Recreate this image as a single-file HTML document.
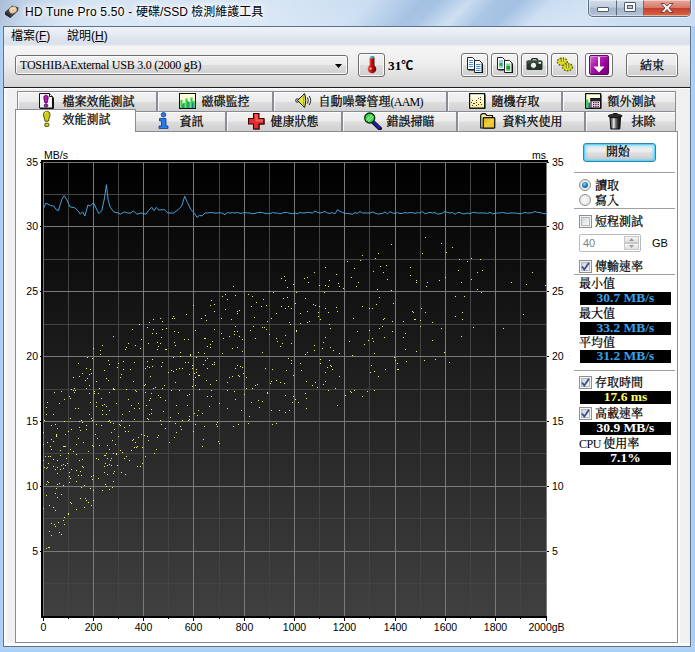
<!DOCTYPE html>
<html lang="zh-Hant">
<head>
<meta charset="utf-8">
<title>HD Tune Pro 5.50 - 硬碟/SSD 檢測維護工具</title>
<style>
*{box-sizing:border-box;margin:0;padding:0}
html,body{width:695px;height:652px;overflow:hidden}
body{position:relative;background:#bcd5ef;font-family:"Liberation Serif","Noto Serif CJK SC",serif;font-size:12px;color:#000;line-height:1}
.abs{position:absolute}
#frame{position:absolute;left:0;top:0;width:695px;height:652px;background:linear-gradient(180deg,#c3d8ef 0,#cbdef3 26px,#b9d3ef 100%)}
#streak{position:absolute;left:0;top:0;width:695px;height:26px;background:linear-gradient(135deg,rgba(255,255,255,0) 0,rgba(255,255,255,.3) 60px,rgba(255,255,255,.32) 200px,rgba(255,255,255,.12) 262px,rgba(100,145,200,.34) 300px,rgba(100,145,200,.30) 312px,rgba(255,255,255,.10) 333px,rgba(100,145,200,.30) 352px,rgba(100,145,200,.34) 368px,rgba(255,255,255,.12) 392px,rgba(255,255,255,.22) 420px,rgba(255,255,255,.05) 460px,rgba(255,255,255,0) 100%)}
#client{position:absolute;left:3px;top:26px;width:688px;height:621px;border:1px solid #5f7186;background:#f0f0f0}
#title{position:absolute;left:25px;top:3px;height:18px;line-height:18px;font-family:"Liberation Sans","Noto Sans CJK TC",sans-serif;font-size:12px;white-space:nowrap;color:#000;text-shadow:0 0 6px #fff,0 0 6px #fff,0 0 10px #fff,0 0 3px #fff}
#menubar{position:absolute;left:4px;top:27px;width:686px;height:19px;background:linear-gradient(180deg,#eef2f8 0,#e6ebf3 40%,#dde3ec 60%,#dbe1ea 90%,#eceff3 100%)}
.menu{position:absolute;top:27px;height:19px;line-height:19px;font-family:"Liberation Sans","Noto Sans CJK TC",sans-serif;font-size:12px;white-space:nowrap}
#toolbar{position:absolute;left:4px;top:46px;width:686px;height:41px;background:linear-gradient(180deg,#f5f5f5 0,#ededed 45%,#d4d4d4 100%)}
#tbline{position:absolute;left:4px;top:87px;width:686px;height:1px;background:#1c1c1c}
#tbline2{position:absolute;left:4px;top:88px;width:686px;height:1px;background:#fff}
.btn{position:absolute;border:1px solid #707070;border-radius:3px;background:linear-gradient(180deg,#f2f2f2 0,#ebebeb 48%,#dddddd 52%,#cfcfcf 100%);box-shadow:inset 0 0 0 1px rgba(255,255,255,.85)}
.tab{position:absolute;border:1px solid #898c95;border-bottom:none;background:linear-gradient(180deg,#f2f2f2 0,#ebebeb 48%,#dddddd 52%,#cfcfcf 100%);box-shadow:inset 1px 1px 0 rgba(255,255,255,.8)}
.tab.sel{background:#fff;z-index:3;box-shadow:none}
.tl{margin-left:.6px;position:absolute;white-space:nowrap;height:12px;line-height:12px;font-size:12px;z-index:4;-webkit-text-stroke:0.25px #000}
#pane{position:absolute;left:15px;top:131px;width:663px;height:512px;border:1px solid #898c95;background:#fff}
.sep{position:absolute;left:574px;width:101px;height:1px;background:#a0a0a0}
.lbl{position:absolute;white-space:nowrap;height:12px;line-height:12px;font-size:12px;-webkit-text-stroke:0.25px #000}
.val{position:absolute;left:580px;width:91px;height:13px;background:#000;text-align:center;font-family:"Liberation Serif",serif;font-weight:bold;font-size:13.5px;line-height:11px;white-space:nowrap;overflow:hidden}
.chk{position:absolute;left:579px;width:13px;height:13px;border:1px solid #8e8f8f;background:#f4f4f4}
.chk::before{content:"";box-sizing:border-box;position:absolute;left:1px;top:1px;width:9px;height:9px;border:1px solid #b4b9bf;background:linear-gradient(135deg,#cdd2d7 0,#e6e8ea 50%,#f7f7f7 100%)}
.chk svg{position:absolute;left:1px;top:1px}
.radio{position:absolute;left:579px;width:12px;height:12px;border-radius:50%;border:1px solid #8e8f8f;background:radial-gradient(circle at 50% 50%,#fdfdfd 0,#e9e9e9 60%,#d5d5d5 100%)}
.icon{position:absolute;z-index:4}
</style>
</head>
<body>
<div id="frame"></div><div id="streak"></div>
<div class="abs" style="left:0;top:26px;width:4px;height:626px;background:linear-gradient(90deg,#a9cdf3,#b6d6f7)"></div>
<div class="abs" style="left:690px;top:26px;width:5px;height:626px;background:linear-gradient(90deg,#b6d6f7,#a6cbf2)"></div>
<div class="abs" style="left:0;top:646px;width:695px;height:6px;background:linear-gradient(180deg,#b6d6f7,#a9cdf3)"></div>
<div class="abs" style="left:0;top:0;width:120px;height:26px;background:linear-gradient(100deg,rgba(120,140,170,.35) 0,rgba(120,140,170,.12) 25px,rgba(120,140,170,0) 70px)"></div>
<svg class="abs" style="left:4px;top:4px" width="16" height="16" viewBox="0 0 16 16">
 <defs><radialGradient id="plat" cx="50%" cy="45%" r="50%"><stop offset="0" stop-color="#f8d9a8"/><stop offset="0.25" stop-color="#fff0d8"/><stop offset="1" stop-color="#d9b07c"/></radialGradient></defs>
 <path d="M1 8 L8.5 1.5 L14.5 3.5 L14 7 L6.5 14 L1 10.5 Z" fill="#3a3f42"/>
 <path d="M1 8 L6.5 12 L6.5 14 L1 10.5 Z" fill="#22272a"/>
 <ellipse cx="9" cy="6" rx="4" ry="3.4" transform="rotate(-25 9 6)" fill="url(#plat)"/>
 <circle cx="9" cy="6" r="0.9" fill="#c99a62"/>
</svg>
<div id="title"><span style="letter-spacing:.22px">HD Tune Pro 5.50 - </span>硬碟/SSD 檢測維護工具</div>
<!-- caption buttons -->
<div class="abs" style="left:588px;top:0;width:103px;height:17px;border:1px solid #5c6d80;border-top:none;border-radius:0 0 5px 5px;overflow:hidden;background:linear-gradient(180deg,#d3dde9 0,#c0cddd 45%,#a5b6cb 50%,#b3c3d7 100%);box-shadow:0 0 0 1px rgba(255,255,255,.55)">
 <div class="abs" style="left:27px;top:0;width:1px;height:17px;background:#5c6d80"></div>
 <div class="abs" style="left:54px;top:0;width:1px;height:17px;background:#5c6d80"></div>
 <div class="abs" style="left:55px;top:0;width:47px;height:17px;background:linear-gradient(180deg,#e7aa9c 0,#d8786a 45%,#c4402c 50%,#d2603f 85%,#e08a5c 100%)"></div>
 <div class="abs" style="left:0;top:0;width:102px;height:16px;box-shadow:inset 0 0 0 1px rgba(255,255,255,.45);border-radius:0 0 4px 4px"></div>
 <!-- minimize -->
 <div class="abs" style="left:8px;top:7px;width:12px;height:5px;border:1px solid #515c6b;background:#fff;border-radius:1px"></div>
 <!-- maximize -->
 <div class="abs" style="left:35px;top:2px;width:12px;height:10px;border:1px solid #515c6b;background:#fff;border-radius:1px"></div>
 <div class="abs" style="left:38px;top:5px;width:6px;height:4px;border:1px solid #515c6b;background:#b7cbe3"></div>
 <!-- close X -->
 <svg class="abs" style="left:70px;top:2px" width="16" height="12" viewBox="0 0 16 12"><path d="M2 1.5h3.2l2.8 2.7 2.8-2.7H14L10 6l4 4.5h-3.2L8 7.6 5.2 10.5H2L6 6z" fill="#fff" stroke="#5a3a3a" stroke-width="0.9" stroke-linejoin="round"/></svg>
</div>

<div id="client"></div>
<div id="menubar"></div>
<div class="menu" style="left:11px">檔案(<u>F</u>)</div>
<div class="menu" style="left:67px">說明(<u>H</u>)</div>
<div id="toolbar"></div><div id="tbline"></div><div id="tbline2"></div>
<!-- combo -->
<div class="abs" style="left:15px;top:55px;width:333px;height:20px;border:1px solid #707070;border-radius:3px;background:linear-gradient(180deg,#f2f2f2 0,#ebebeb 48%,#dddddd 52%,#cfcfcf 100%);box-shadow:inset 0 0 0 1px rgba(255,255,255,.85)"></div>
<div class="lbl" style="left:20px;top:59px;letter-spacing:-.23px;-webkit-text-stroke:0">TOSHIBAExternal USB 3.0 (2000 gB)</div>
<svg class="abs" style="left:335px;top:64px" width="7" height="4" viewBox="0 0 7 4"><path d="M0 0h7L3.500 4z" fill="#000"/></svg>
<!-- thermometer -->
<div class="btn" style="left:358px;top:53px;width:27px;height:24px"></div>
<svg class="abs" style="left:365px;top:55px" width="14" height="19" viewBox="0 0 14 19">
 <defs><linearGradient id="thr" x1="0" y1="0" x2="1" y2="0"><stop offset="0" stop-color="#f05a4a"/><stop offset="0.4" stop-color="#c81414"/><stop offset="1" stop-color="#6a0606"/></linearGradient>
 <linearGradient id="thb" x1="0" y1="0" x2="1" y2="0"><stop offset="0" stop-color="#7fd0e6"/><stop offset="1" stop-color="#2a6f90"/></linearGradient></defs>
 <rect x="4.5" y="1" width="5" height="4" rx="1.5" fill="url(#thb)"/>
 <rect x="4.5" y="3.5" width="5" height="10" fill="url(#thr)"/>
 <circle cx="7" cy="14" r="4.3" fill="url(#thr)"/>
 <circle cx="5.6" cy="13.6" r="1" fill="#ffd8c8"/>
</svg>
<div class="abs" style="left:388px;top:57px;font-family:'Liberation Serif','Noto Serif CJK SC',serif;font-weight:bold;font-size:13.3px;line-height:16px;white-space:nowrap">31<span style="font-family:'Noto Sans CJK TC',sans-serif;font-size:12px;font-weight:bold">℃</span></div>
<!-- toolbar buttons -->
<div class="btn" style="left:461px;top:53px;width:27px;height:24px"></div>
<svg class="abs" style="left:466px;top:57px" width="18" height="16" viewBox="0 0 18 16">
 <path d="M1.5 0.5h5l2 2v10h-7z" fill="#fff" stroke="#222" stroke-width="1"/>
 <path d="M3 3.5h4M3 5.5h4M3 7.5h4M3 9.5h4" stroke="#3a8fe0" stroke-width="1"/>
 <path d="M8.500 3.500h5l2.500 2.500v9.500h-7.500z" fill="#fff" stroke="#222" stroke-width="1"/>
 <path d="M10 7.500h4.500M10 9.500h4.500M10 11.500h4.500M10 13.500h4.500" stroke="#3a8fe0" stroke-width="1"/>
 <path d="M9.500 16h7v-9.500M2.500 13h5.500" stroke="#111" stroke-width="1" fill="none"/>
</svg>
<div class="btn" style="left:491px;top:53px;width:27px;height:24px"></div>
<svg class="abs" style="left:496px;top:57px" width="18" height="16" viewBox="0 0 18 16">
 <path d="M1.5 0.500h5l2 2v10h-7z" fill="#fff" stroke="#222" stroke-width="1"/>
 <rect x="3" y="3" width="4" height="8" fill="#8fd0f0"/><rect x="3.500" y="6" width="3" height="3" fill="#2fb030"/>
 <path d="M8.500 3.500h5l2.500 2.500v9.500h-7.500z" fill="#fff" stroke="#222" stroke-width="1"/>
 <rect x="10" y="6.500" width="4.500" height="7.500" fill="#8fd0a0"/><rect x="10.500" y="9" width="3.500" height="3.500" fill="#1f9a28"/>
 <path d="M9.500 16h7v-9.500M2.500 13h5.500" stroke="#111" stroke-width="1" fill="none"/>
</svg>
<div class="btn" style="left:521px;top:53px;width:27px;height:24px"></div>
<svg class="abs" style="left:526px;top:58px" width="17" height="13" viewBox="0 0 17 13">
 <path d="M5 2.500 L6.500 0.500 H10.500 L12 2.500" fill="none" stroke="#1d2a22" stroke-width="1.4"/>
 <rect x="0.500" y="2.500" width="16" height="9.500" rx="1.500" fill="#24362b"/>
 <rect x="0.500" y="2.500" width="16" height="3" rx="1.500" fill="#3b5243"/>
 <circle cx="7.500" cy="7.300" r="3.100" fill="#f4f4f4" stroke="#111" stroke-width="0.800"/>
 <rect x="12.500" y="4" width="2.500" height="1.800" fill="#e8efe8"/>
</svg>
<div class="btn" style="left:551px;top:53px;width:27px;height:24px"></div>
<svg class="abs" style="left:556px;top:56px" width="19" height="18" viewBox="0 0 19 18">
 <g><ellipse cx="6.300" cy="5.700" rx="5" ry="3.700" fill="#dcdc24" stroke="#5e5c00" stroke-width="1.300" stroke-dasharray="1.600 1.300"/><ellipse cx="6.300" cy="5.700" rx="3.900" ry="2.700" fill="#dcdc24"/></g>
 <g><ellipse cx="11.500" cy="11.100" rx="5" ry="3.700" fill="#d4d41c" stroke="#5e5c00" stroke-width="1.300" stroke-dasharray="1.600 1.300"/><ellipse cx="11.500" cy="11.100" rx="3.900" ry="2.700" fill="#d4d41c"/></g>
 <path d="M6.300 1v5M11.700 7v5" stroke="#f4f0a8" stroke-width="1.200"/>
 <path d="M5.300 1.500v4.500M7.300 1.500v4.500M10.700 7.500v4.500M12.700 7.500v4.500" stroke="#6a6810" stroke-width="0.800"/>
</svg>
<div class="btn" style="left:585px;top:53px;width:28px;height:24px;background:#fff"></div>
<div class="abs" style="left:589px;top:55px;width:20px;height:20px;border-radius:2px;background:linear-gradient(135deg,#d070d4 0,#b020b0 35%,#900090 70%,#780078 100%);border:1px solid #6a006a;box-shadow:inset 1px 1px 0 rgba(255,255,255,.35)"></div>
<svg class="abs" style="left:592px;top:57px" width="14" height="16" viewBox="0 0 14 16"><path d="M6 0h2v9.500h4.500L7 15.500 1.500 9.500H6z" fill="#fff"/></svg>
<!-- exit -->
<div class="btn" style="left:626px;top:53px;width:52px;height:24px"></div>
<div class="lbl" style="left:640px;top:60px">結束</div>

<!-- row 1 -->
<div class="tab" style="left:17px;top:91px;width:140px;height:21px"></div>
<div class="tab" style="left:157px;top:91px;width:116px;height:21px"></div>
<div class="tab" style="left:273px;top:91px;width:174px;height:21px"></div>
<div class="tab" style="left:447px;top:91px;width:115px;height:21px"></div>
<div class="tab" style="left:562px;top:91px;width:114px;height:21px"></div>
<!-- row 2 -->
<div class="tab" style="left:134px;top:111px;width:92px;height:20px"></div>
<div class="tab" style="left:226px;top:111px;width:116px;height:20px"></div>
<div class="tab" style="left:342px;top:111px;width:115px;height:20px"></div>
<div class="tab" style="left:457px;top:111px;width:128px;height:20px"></div>
<div class="tab" style="left:585px;top:111px;width:91px;height:20px"></div>
<div class="tab sel" style="left:15px;top:109px;width:121px;height:23px"></div>
<!-- row1 labels -->
<div class="tl" style="left:62px;top:96px">檔案效能測試</div>
<div class="tl" style="left:201px;top:96px">磁碟監控</div>
<div class="tl" style="left:318px;top:96px">自動噪聲管理<span style="letter-spacing:-.8px;-webkit-text-stroke:0">(AAM)</span></div>
<div class="tl" style="left:491px;top:96px">隨機存取</div>
<div class="tl" style="left:607px;top:96px">額外測試</div>
<!-- row2 labels -->
<div class="tl" style="left:62px;top:114px">效能測試</div>
<div class="tl" style="left:179px;top:116px">資訊</div>
<div class="tl" style="left:270px;top:116px">健康狀態</div>
<div class="tl" style="left:386px;top:116px">錯誤掃瞄</div>
<div class="tl" style="left:502px;top:116px">資料夾使用</div>
<div class="tl" style="left:631px;top:116px">抹除</div>
<!-- row1 icons -->
<svg class="icon" style="left:39px;top:93px" width="15" height="16" viewBox="0 0 15 16">
 <path d="M0.500 0.500h10l3 3v11.500h-13z" fill="#f4f4f4" stroke="#111"/>
 <path d="M10.500 0.500v3h3" fill="#fff" stroke="#111"/>
 <path d="M1 15.500h13.500v-11" fill="none" stroke="#111" stroke-width="1"/>
 <path d="M4.800 4.500c0-3 4.400-3 4.400 0 0 2-1 3.500-1.200 5.500h-2c-0.200-2-1.200-3.500-1.200-5.500z" fill="#b818b8" stroke="#4a004a" stroke-width="0.900"/>
 <rect x="5.300" y="11.300" width="3.400" height="2.500" rx="1" fill="#b818b8" stroke="#4a004a" stroke-width="0.900"/>
</svg>
<svg class="icon" style="left:179px;top:93px" width="17" height="16" viewBox="0 0 17 16">
 <rect x="0.500" y="0.500" width="16" height="15" fill="#fdfdd8" stroke="#111"/>
 <path d="M1 15.500h15.500" stroke="#111" stroke-width="1.500"/>
 <path d="M2.500 15v-8M5 15v-5M7.500 15v-9.500M10 15v-6M12.500 15v-10.500M14.700 15v-7" stroke="#34d048" stroke-width="2.200"/>
 <path d="M4 15v-4M9 15v-7M13.700 15v-5" stroke="#2070a0" stroke-width="1.200"/>
</svg>
<svg class="icon" style="left:295px;top:93px" width="17" height="16" viewBox="0 0 17 16">
 <circle cx="2.300" cy="7.500" r="1.700" fill="#ddd" stroke="#111" stroke-width="0.900"/>
 <path d="M2.500 7.500L9.500 0.600c1.600 4.500 1.600 9.300 0 13.800z" fill="#e6e640" stroke="#111" stroke-width="1" stroke-linejoin="round"/>
 <path d="M8 2.500c1 3.300 1 6.700 0 10" fill="none" stroke="#a8a020" stroke-width="1"/>
 <path d="M12.300 4.500c1.200 2 1.200 4 0 6M14.200 3c2 3 2 6 0 9" fill="none" stroke="#222" stroke-width="1"/>
</svg>
<svg class="icon" style="left:469px;top:93px" width="17" height="16" viewBox="0 0 17 16">
 <defs><linearGradient id="rnd" x1="0" y1="0" x2="0" y2="1"><stop offset="0" stop-color="#fffff4"/><stop offset="1" stop-color="#fcee9c"/></linearGradient></defs>
 <rect x="0.600" y="0.600" width="15" height="14.500" fill="url(#rnd)" stroke="#111" stroke-width="1.200"/>
 <path d="M1 15.600h15v-14" fill="none" stroke="#111" stroke-width="1"/>
 <path d="M3 7h1v1h-1zM2 9h1v1h-1zM3 12h1v1h-1zM5 10h1v1h-1zM7 7h1v1h-1zM7 9h1v1h-1zM7 12h1v1h-1zM9 5h1v1h-1zM9 11h1v1h-1zM11 4h1v1h-1zM11 6h1v1h-1zM11 9h1v1h-1zM12 11h1v1h-1zM4 10h1v1h-1z" fill="#5a3a10"/>
</svg>
<svg class="icon" style="left:585px;top:93px" width="17" height="16" viewBox="0 0 17 16">
 <rect x="0.600" y="0.600" width="15" height="14.500" fill="#ffffd8" stroke="#111" stroke-width="1.200"/>
 <path d="M1 15.600h15v-14" fill="none" stroke="#111" stroke-width="1"/>
 <path d="M2.200 15v-8.500" stroke="#38d048" stroke-width="2.200"/><path d="M4.300 15v-5.500" stroke="#2868b0" stroke-width="2"/>
 <rect x="6" y="5.500" width="9.500" height="9.500" fill="#fbe0ec" stroke="#111" stroke-width="1"/>
 <rect x="6" y="5.500" width="9.500" height="2.300" fill="#182858" stroke="#111" stroke-width="1"/>
 <path d="M8 9h1.300v1.300h-1.300zM10.300 9h1.300v1.300h-1.300zM12.600 9h1.300v1.300h-1.300zM8 11h1.300v1.300h-1.300zM10.300 11h1.300v1.300h-1.300zM12.600 11h1.300v1.300h-1.300zM8 13h1.300v1.300h-1.300zM10.300 13h1.300v1.300h-1.300zM12.600 13h1.300v1.300h-1.300z" fill="#3a1848"/>
</svg>
<!-- row2 icons -->
<svg class="icon" style="left:42px;top:110px" width="10" height="18" viewBox="0 0 10 18">
 <path d="M1.500 4.500c0-4.300 6.500-4.300 6.500 0 0 2.200-1.300 4-1.600 6.700h-3.300c-0.300-2.700-1.600-4.500-1.600-6.700z" fill="#cfcf18" stroke="#4a4800" stroke-width="1"/>
 <path d="M3 3.500c0.300-1.300 1.500-1.800 2.300-1.500" stroke="#f4f480" stroke-width="1" fill="none"/>
 <rect x="2.700" y="13.200" width="4.200" height="3.300" rx="1.400" fill="#cfcf18" stroke="#4a4800" stroke-width="1"/>
</svg>
<svg class="icon" style="left:157px;top:112px" width="13" height="17" viewBox="0 0 13 17">
 <circle cx="6.500" cy="2.800" r="2.300" fill="#2a7ae8" stroke="#0a3a90" stroke-width="0.800"/>
 <path d="M2.500 6.500h6.500v7.500h2v2.500h-9v-2.500h2.500v-5h-2z" fill="#2a7ae8" stroke="#0a3a90" stroke-width="0.800"/>
</svg>
<svg class="icon" style="left:248px;top:113px" width="17" height="17" viewBox="0 0 17 17">
 <path d="M5.500 0.500h5.500v5h5v5.500h-5v5h-5.500v-5h-5v-5.500h5z" fill="#e03030" stroke="#3a0505" stroke-width="1.100"/>
 <path d="M6.500 1.500h3v5h5.500v2h-7.500v-3z" fill="#ff8878" opacity=".55"/>
 <path d="M6 16.300h5.300v-5h5v-5" fill="none" stroke="#300" stroke-width="0.800" opacity=".7"/>
</svg>
<svg class="icon" style="left:363px;top:112px" width="19" height="18" viewBox="0 0 19 18">
 <path d="M10.500 10.500l6.300 6" stroke="#0a0a30" stroke-width="4.200" stroke-linecap="round"/>
 <path d="M10.300 10l6 5.800" stroke="#20209c" stroke-width="2.600" stroke-linecap="round"/>
 <circle cx="6.700" cy="6" r="5" fill="#44d454" stroke="#082a0c" stroke-width="1.300"/>
 <path d="M3.500 8L9 3M5 9.500l5.500-5" stroke="#a8f4a8" stroke-width="1" fill="none"/>
</svg>
<svg class="icon" style="left:480px;top:113px" width="16" height="16" viewBox="0 0 16 16">
 <defs><linearGradient id="fld" x1="0" y1="0" x2="1" y2="1"><stop offset="0" stop-color="#d8a818"/><stop offset="0.5" stop-color="#f0d040"/><stop offset="1" stop-color="#e0b828"/></linearGradient></defs>
 <path d="M0.700 3c0-1.500 1-2.300 2.300-2.300h2.200l1.800 1.800h5.500v12.500h-11.800z" fill="#f2eaa8" stroke="#111" stroke-width="1.200" stroke-linejoin="round"/>
 <rect x="3.200" y="4.700" width="11.500" height="10.500" rx="0.800" fill="url(#fld)" stroke="#111" stroke-width="1.300"/>
</svg>
<svg class="icon" style="left:608px;top:113px" width="15" height="17" viewBox="0 0 15 17">
 <defs><linearGradient id="tr" x1="0" y1="0" x2="1" y2="0"><stop offset="0" stop-color="#2a2a2a"/><stop offset="0.22" stop-color="#8a8a8a"/><stop offset="0.36" stop-color="#f4f4f4"/><stop offset="0.5" stop-color="#8a8a8a"/><stop offset="0.75" stop-color="#2e2e2e"/><stop offset="1" stop-color="#080808"/></linearGradient></defs>
 <path d="M5 1.500c0-1.300 4.500-1.300 4.500 0" fill="none" stroke="#111" stroke-width="1.200"/>
 <path d="M2 4h10.500l-0.700 12h-9z" fill="url(#tr)" stroke="#111" stroke-width="1"/>
 <ellipse cx="7.200" cy="3" rx="7" ry="1.800" fill="#2c2c2c" stroke="#0a0a0a" stroke-width="0.800"/>
</svg>

<div class="abs" style="left:4px;top:89px;width:5px;height:555px;background:linear-gradient(90deg,#fdfdfd,rgba(253,253,253,0))"></div>
<div id="pane"></div>
<div class="abs" style="left:678px;top:131px;width:2px;height:514px;background:#fff"></div>
<div class="abs" style="left:4px;top:643px;width:686px;height:3px;background:#fcfcfc"></div>
<svg id="chart" width="695" height="652" viewBox="0 0 695 652" style="position:absolute;left:0;top:0" shape-rendering="crispEdges">
<defs><linearGradient id="cg" x1="0" y1="0" x2="0" y2="1"><stop offset="0" stop-color="#000"/><stop offset="1" stop-color="#404040"/></linearGradient></defs>
<rect x="41" y="160" width="506" height="458" fill="#000"/>
<rect x="43" y="162" width="504" height="454" fill="url(#cg)"/>
<path d="M68.5 162V616M118.5 162V616M168.5 162V616M219.5 162V616M269.5 162V616M319.5 162V616M369.5 162V616M420.5 162V616M470.5 162V616M520.5 162V616M43 583.5H547M43 518.5H547M43 453.5H547M43 389.5H547M43 324.5H547M43 259.5H547M43 194.5H547" stroke="#444444" stroke-width="1" fill="none"/>
<path d="M43.5 162V616M93.5 162V616M143.5 162V616M193.5 162V616M244.5 162V616M294.5 162V616M344.5 162V616M395.5 162V616M445.5 162V616M495.5 162V616M546.5 162V616M43 616.5H547M43 551.5H547M43 486.5H547M43 421.5H547M43 356.5H547M43 291.5H547M43 226.5H547M43 162.5H547" stroke="#7a7a7a" stroke-width="1" fill="none"/>
<rect x="41" y="160" width="2" height="458" fill="#000"/>
<rect x="41" y="160" width="507" height="2" fill="#000"/>
<rect x="41" y="616" width="506" height="2" fill="#000"/>
<path d="M40 551.5H41M547 551.5H549M40 486.5H41M547 486.5H549M40 421.5H41M547 421.5H549M40 356.5H41M547 356.5H549M40 291.5H41M547 291.5H549M40 226.5H41M547 226.5H549M40 162.5H41M547 162.5H549M43.5 618V621M68.5 618V619M93.5 618V621M118.5 618V619M143.5 618V621M168.5 618V619M193.5 618V621M219.5 618V619M244.5 618V621M269.5 618V619M294.5 618V621M319.5 618V619M344.5 618V621M369.5 618V619M395.5 618V621M420.5 618V619M445.5 618V621M470.5 618V619M495.5 618V621M520.5 618V619M546.5 618V621" stroke="#000" stroke-width="1" fill="none"/>
<path d="M81 420h1v1h-1zM57 467h1v1h-1zM65 465h1v1h-1zM101 398h1v1h-1zM153 329h1v1h-1zM80 498h1v1h-1zM89 414h1v1h-1zM204 426h1v1h-1zM163 411h1v1h-1zM123 361h1v1h-1zM214 364h1v1h-1zM120 377h1v1h-1zM82 422h1v1h-1zM214 311h1v1h-1zM222 353h1v1h-1zM413 312h1v1h-1zM266 329h1v1h-1zM119 424h1v1h-1zM174 437h1v1h-1zM76 481h1v1h-1zM63 464h1v1h-1zM325 285h1v1h-1zM141 339h1v1h-1zM88 451h1v1h-1zM112 487h1v1h-1zM211 300h1v1h-1zM231 319h1v1h-1zM358 282h1v1h-1zM69 472h1v1h-1zM84 485h1v1h-1zM68 431h1v1h-1zM81 475h1v1h-1zM74 388h1v1h-1zM182 420h1v1h-1zM330 328h1v1h-1zM80 430h1v1h-1zM477 272h1v1h-1zM86 388h1v1h-1zM132 440h1v1h-1zM471 258h1v1h-1zM102 414h1v1h-1zM49 505h1v1h-1zM425 312h1v1h-1zM523 314h1v1h-1zM96 402h1v1h-1zM180 356h1v1h-1zM248 294h1v1h-1zM180 426h1v1h-1zM314 272h1v1h-1zM415 319h1v1h-1zM380 266h1v1h-1zM373 341h1v1h-1zM46 407h1v1h-1zM403 321h1v1h-1zM98 459h1v1h-1zM219 403h1v1h-1zM384 337h1v1h-1zM379 328h1v1h-1zM198 375h1v1h-1zM43 460h1v1h-1zM207 396h1v1h-1zM306 398h1v1h-1zM117 367h1v1h-1zM293 284h1v1h-1zM189 374h1v1h-1zM199 375h1v1h-1zM360 260h1v1h-1zM412 311h1v1h-1zM61 465h1v1h-1zM374 371h1v1h-1zM79 376h1v1h-1zM420 320h1v1h-1zM461 336h1v1h-1zM135 442h1v1h-1zM47 467h1v1h-1zM133 381h1v1h-1zM459 259h1v1h-1zM113 481h1v1h-1zM76 454h1v1h-1zM111 465h1v1h-1zM265 368h1v1h-1zM61 391h1v1h-1zM64 399h1v1h-1zM135 390h1v1h-1zM76 470h1v1h-1zM55 510h1v1h-1zM293 375h1v1h-1zM137 466h1v1h-1zM280 346h1v1h-1zM70 398h1v1h-1zM333 350h1v1h-1zM455 316h1v1h-1zM238 375h1v1h-1zM76 509h1v1h-1zM85 498h1v1h-1zM252 388h1v1h-1zM83 442h1v1h-1zM532 272h1v1h-1zM140 466h1v1h-1zM188 420h1v1h-1zM113 473h1v1h-1zM48 482h1v1h-1zM289 322h1v1h-1zM151 413h1v1h-1zM276 313h1v1h-1zM235 326h1v1h-1zM196 372h1v1h-1zM329 324h1v1h-1zM262 401h1v1h-1zM69 396h1v1h-1zM234 334h1v1h-1zM313 304h1v1h-1zM248 423h1v1h-1zM61 494h1v1h-1zM284 276h1v1h-1zM180 352h1v1h-1zM241 410h1v1h-1zM125 431h1v1h-1zM253 326h1v1h-1zM193 379h1v1h-1zM371 365h1v1h-1zM47 481h1v1h-1zM269 334h1v1h-1zM217 422h1v1h-1zM109 364h1v1h-1zM267 392h1v1h-1zM49 547h1v1h-1zM124 458h1v1h-1zM337 405h1v1h-1zM73 377h1v1h-1zM120 425h1v1h-1zM339 353h1v1h-1zM55 526h1v1h-1zM405 349h1v1h-1zM92 445h1v1h-1zM320 319h1v1h-1zM319 306h1v1h-1zM290 324h1v1h-1zM397 369h1v1h-1zM123 369h1v1h-1zM246 388h1v1h-1zM86 425h1v1h-1zM100 354h1v1h-1zM78 475h1v1h-1zM106 453h1v1h-1zM288 358h1v1h-1zM147 418h1v1h-1zM106 414h1v1h-1zM99 445h1v1h-1zM422 253h1v1h-1zM51 439h1v1h-1zM219 443h1v1h-1zM328 286h1v1h-1zM70 502h1v1h-1zM410 275h1v1h-1zM173 357h1v1h-1zM391 290h1v1h-1zM109 392h1v1h-1zM60 455h1v1h-1zM101 425h1v1h-1zM427 282h1v1h-1zM104 455h1v1h-1zM125 474h1v1h-1zM160 420h1v1h-1zM102 490h1v1h-1zM258 400h1v1h-1zM189 419h1v1h-1zM325 337h1v1h-1zM420 326h1v1h-1zM250 330h1v1h-1zM444 352h1v1h-1zM375 258h1v1h-1zM511 282h1v1h-1zM50 446h1v1h-1zM133 439h1v1h-1zM424 360h1v1h-1zM140 348h1v1h-1zM55 469h1v1h-1zM93 446h1v1h-1zM157 342h1v1h-1zM51 535h1v1h-1zM287 287h1v1h-1zM426 286h1v1h-1zM128 399h1v1h-1zM237 347h1v1h-1zM425 237h1v1h-1zM164 385h1v1h-1zM315 305h1v1h-1zM227 390h1v1h-1zM305 354h1v1h-1zM59 532h1v1h-1zM452 247h1v1h-1zM64 517h1v1h-1zM169 421h1v1h-1zM254 317h1v1h-1zM73 390h1v1h-1zM145 392h1v1h-1zM82 373h1v1h-1zM153 319h1v1h-1zM318 316h1v1h-1zM178 332h1v1h-1zM53 507h1v1h-1zM336 274h1v1h-1zM170 417h1v1h-1zM96 406h1v1h-1zM144 435h1v1h-1zM244 394h1v1h-1zM91 418h1v1h-1zM58 522h1v1h-1zM239 376h1v1h-1zM118 436h1v1h-1zM211 390h1v1h-1zM477 289h1v1h-1zM44 420h1v1h-1zM156 333h1v1h-1zM46 468h1v1h-1zM65 434h1v1h-1zM80 471h1v1h-1zM70 449h1v1h-1zM142 447h1v1h-1zM285 412h1v1h-1zM379 297h1v1h-1zM306 381h1v1h-1zM330 365h1v1h-1zM149 400h1v1h-1zM53 459h1v1h-1zM335 388h1v1h-1zM234 391h1v1h-1zM162 362h1v1h-1zM48 456h1v1h-1zM295 303h1v1h-1zM178 413h1v1h-1zM168 372h1v1h-1zM281 306h1v1h-1zM189 394h1v1h-1zM347 261h1v1h-1zM93 348h1v1h-1zM503 328h1v1h-1zM59 483h1v1h-1zM374 353h1v1h-1zM188 362h1v1h-1zM129 460h1v1h-1zM256 302h1v1h-1zM198 352h1v1h-1zM207 358h1v1h-1zM471 279h1v1h-1zM113 336h1v1h-1zM296 330h1v1h-1zM325 372h1v1h-1zM337 311h1v1h-1zM51 523h1v1h-1zM192 365h1v1h-1zM48 547h1v1h-1zM141 434h1v1h-1zM96 402h1v1h-1zM406 361h1v1h-1zM356 286h1v1h-1zM45 456h1v1h-1zM242 367h1v1h-1zM108 380h1v1h-1zM105 484h1v1h-1zM205 360h1v1h-1zM190 354h1v1h-1zM126 389h1v1h-1zM272 424h1v1h-1zM175 345h1v1h-1zM69 482h1v1h-1zM263 299h1v1h-1zM206 380h1v1h-1zM113 389h1v1h-1zM362 396h1v1h-1zM285 280h1v1h-1zM362 306h1v1h-1zM262 327h1v1h-1zM336 307h1v1h-1zM276 338h1v1h-1zM233 426h1v1h-1zM49 531h1v1h-1zM79 460h1v1h-1zM264 327h1v1h-1zM324 292h1v1h-1zM354 268h1v1h-1zM96 424h1v1h-1zM237 311h1v1h-1zM68 513h1v1h-1zM129 425h1v1h-1zM272 369h1v1h-1zM296 292h1v1h-1zM158 395h1v1h-1zM267 321h1v1h-1zM325 381h1v1h-1zM449 362h1v1h-1zM312 385h1v1h-1zM332 369h1v1h-1zM99 388h1v1h-1zM238 424h1v1h-1zM307 322h1v1h-1zM152 333h1v1h-1zM96 458h1v1h-1zM147 366h1v1h-1zM291 308h1v1h-1zM131 450h1v1h-1zM285 395h1v1h-1zM216 424h1v1h-1zM105 463h1v1h-1zM339 376h1v1h-1zM195 424h1v1h-1zM446 252h1v1h-1zM149 322h1v1h-1zM165 428h1v1h-1zM97 438h1v1h-1zM262 352h1v1h-1zM79 421h1v1h-1zM382 326h1v1h-1zM161 424h1v1h-1zM300 313h1v1h-1zM240 366h1v1h-1zM67 463h1v1h-1zM235 399h1v1h-1zM232 376h1v1h-1zM90 402h1v1h-1zM184 339h1v1h-1zM304 278h1v1h-1zM214 362h1v1h-1zM239 310h1v1h-1zM416 351h1v1h-1zM295 399h1v1h-1zM57 497h1v1h-1zM160 397h1v1h-1zM113 453h1v1h-1zM197 415h1v1h-1zM98 478h1v1h-1zM237 365h1v1h-1zM432 322h1v1h-1zM323 342h1v1h-1zM75 390h1v1h-1zM114 429h1v1h-1zM91 505h1v1h-1zM107 445h1v1h-1zM239 336h1v1h-1zM345 395h1v1h-1zM305 393h1v1h-1zM46 548h1v1h-1zM109 464h1v1h-1zM137 446h1v1h-1zM86 368h1v1h-1zM252 296h1v1h-1zM94 393h1v1h-1zM166 328h1v1h-1zM104 472h1v1h-1zM176 432h1v1h-1zM201 318h1v1h-1zM210 344h1v1h-1zM160 343h1v1h-1zM50 456h1v1h-1zM132 329h1v1h-1zM374 390h1v1h-1zM135 345h1v1h-1zM196 357h1v1h-1zM206 320h1v1h-1zM155 387h1v1h-1zM445 277h1v1h-1zM128 431h1v1h-1zM306 408h1v1h-1zM203 439h1v1h-1zM92 358h1v1h-1zM308 282h1v1h-1zM234 331h1v1h-1zM98 393h1v1h-1zM68 453h1v1h-1zM246 377h1v1h-1zM209 406h1v1h-1zM129 411h1v1h-1zM56 488h1v1h-1zM214 304h1v1h-1zM150 376h1v1h-1zM282 343h1v1h-1zM82 459h1v1h-1zM435 359h1v1h-1zM47 442h1v1h-1zM55 424h1v1h-1zM279 410h1v1h-1zM174 318h1v1h-1zM403 337h1v1h-1zM63 485h1v1h-1zM349 341h1v1h-1zM166 349h1v1h-1zM242 339h1v1h-1zM307 277h1v1h-1zM121 472h1v1h-1zM329 360h1v1h-1zM461 282h1v1h-1zM368 340h1v1h-1zM373 271h1v1h-1zM113 423h1v1h-1zM367 391h1v1h-1zM353 318h1v1h-1zM318 312h1v1h-1zM64 446h1v1h-1zM288 306h1v1h-1zM175 423h1v1h-1zM309 321h1v1h-1zM104 404h1v1h-1zM195 377h1v1h-1zM93 475h1v1h-1zM210 384h1v1h-1zM54 392h1v1h-1zM237 331h1v1h-1zM194 373h1v1h-1zM182 368h1v1h-1zM162 321h1v1h-1zM432 340h1v1h-1zM64 524h1v1h-1zM173 316h1v1h-1zM223 338h1v1h-1zM210 347h1v1h-1zM152 359h1v1h-1zM154 453h1v1h-1zM378 253h1v1h-1zM307 311h1v1h-1zM71 503h1v1h-1zM255 385h1v1h-1zM69 476h1v1h-1zM181 429h1v1h-1zM46 495h1v1h-1zM100 350h1v1h-1zM78 408h1v1h-1zM235 368h1v1h-1zM179 390h1v1h-1zM271 318h1v1h-1zM158 435h1v1h-1zM134 447h1v1h-1zM378 376h1v1h-1zM372 308h1v1h-1zM111 458h1v1h-1zM545 285h1v1h-1zM57 428h1v1h-1zM51 425h1v1h-1zM43 432h1v1h-1zM165 349h1v1h-1zM89 385h1v1h-1zM63 520h1v1h-1zM116 454h1v1h-1zM320 363h1v1h-1zM157 349h1v1h-1zM338 283h1v1h-1zM384 318h1v1h-1zM91 373h1v1h-1zM145 384h1v1h-1zM193 431h1v1h-1zM352 355h1v1h-1zM289 410h1v1h-1zM291 343h1v1h-1zM48 463h1v1h-1zM109 420h1v1h-1zM93 500h1v1h-1zM195 330h1v1h-1zM54 524h1v1h-1zM117 465h1v1h-1zM221 333h1v1h-1zM85 380h1v1h-1zM161 337h1v1h-1zM410 267h1v1h-1zM134 408h1v1h-1zM386 265h1v1h-1zM193 305h1v1h-1zM161 366h1v1h-1zM60 469h1v1h-1zM78 363h1v1h-1zM237 313h1v1h-1zM51 449h1v1h-1zM116 403h1v1h-1zM109 410h1v1h-1zM187 405h1v1h-1zM222 296h1v1h-1zM176 405h1v1h-1zM121 420h1v1h-1zM65 446h1v1h-1zM212 341h1v1h-1zM204 353h1v1h-1zM107 458h1v1h-1zM218 441h1v1h-1zM106 406h1v1h-1zM462 319h1v1h-1zM59 403h1v1h-1zM150 398h1v1h-1zM102 345h1v1h-1zM134 419h1v1h-1zM343 288h1v1h-1zM285 308h1v1h-1zM269 291h1v1h-1zM296 331h1v1h-1zM330 347h1v1h-1zM227 382h1v1h-1zM276 380h1v1h-1zM149 414h1v1h-1zM187 395h1v1h-1zM214 329h1v1h-1zM339 286h1v1h-1zM162 388h1v1h-1zM186 314h1v1h-1zM481 292h1v1h-1zM151 409h1v1h-1zM416 280h1v1h-1zM146 405h1v1h-1zM362 255h1v1h-1zM233 286h1v1h-1zM323 384h1v1h-1zM458 270h1v1h-1zM325 267h1v1h-1zM83 467h1v1h-1zM91 476h1v1h-1zM139 324h1v1h-1zM158 346h1v1h-1zM43 508h1v1h-1zM251 402h1v1h-1zM113 388h1v1h-1zM331 366h1v1h-1zM70 478h1v1h-1zM229 377h1v1h-1zM130 369h1v1h-1zM114 471h1v1h-1zM138 403h1v1h-1zM369 308h1v1h-1zM232 348h1v1h-1zM128 343h1v1h-1zM225 294h1v1h-1zM165 400h1v1h-1zM126 347h1v1h-1zM107 465h1v1h-1zM441 328h1v1h-1zM199 389h1v1h-1zM74 392h1v1h-1zM92 479h1v1h-1zM136 447h1v1h-1zM114 389h1v1h-1zM317 387h1v1h-1zM147 327h1v1h-1zM102 405h1v1h-1zM376 304h1v1h-1zM227 408h1v1h-1zM192 368h1v1h-1zM149 367h1v1h-1zM151 393h1v1h-1zM249 416h1v1h-1zM187 405h1v1h-1zM75 408h1v1h-1zM383 272h1v1h-1zM76 444h1v1h-1zM139 408h1v1h-1zM108 360h1v1h-1zM90 488h1v1h-1zM271 410h1v1h-1zM124 427h1v1h-1zM89 374h1v1h-1zM110 422h1v1h-1zM43 432h1v1h-1zM53 414h1v1h-1zM107 474h1v1h-1zM387 279h1v1h-1zM287 297h1v1h-1zM414 319h1v1h-1zM283 298h1v1h-1zM56 434h1v1h-1zM398 369h1v1h-1zM266 305h1v1h-1zM439 280h1v1h-1zM57 484h1v1h-1zM126 456h1v1h-1zM105 455h1v1h-1zM405 333h1v1h-1zM79 427h1v1h-1zM204 338h1v1h-1zM174 342h1v1h-1zM120 450h1v1h-1zM94 391h1v1h-1zM131 405h1v1h-1zM61 534h1v1h-1zM64 421h1v1h-1zM70 449h1v1h-1zM202 446h1v1h-1zM235 295h1v1h-1zM108 421h1v1h-1zM122 452h1v1h-1zM397 363h1v1h-1zM285 335h1v1h-1zM144 385h1v1h-1zM106 486h1v1h-1zM325 308h1v1h-1zM291 360h1v1h-1zM63 446h1v1h-1zM88 502h1v1h-1zM276 423h1v1h-1zM307 352h1v1h-1zM192 386h1v1h-1zM251 306h1v1h-1zM122 414h1v1h-1zM93 490h1v1h-1zM441 243h1v1h-1zM526 284h1v1h-1zM255 338h1v1h-1zM421 308h1v1h-1zM136 391h1v1h-1zM169 442h1v1h-1zM216 380h1v1h-1zM153 388h1v1h-1zM71 389h1v1h-1zM198 410h1v1h-1zM102 410h1v1h-1zM63 468h1v1h-1zM205 338h1v1h-1zM467 261h1v1h-1zM87 357h1v1h-1zM78 438h1v1h-1zM46 484h1v1h-1zM162 329h1v1h-1zM210 305h1v1h-1zM286 370h1v1h-1zM328 390h1v1h-1zM416 282h1v1h-1zM205 315h1v1h-1zM110 460h1v1h-1zM217 426h1v1h-1zM91 418h1v1h-1zM148 440h1v1h-1zM261 306h1v1h-1zM136 447h1v1h-1zM314 350h1v1h-1zM152 366h1v1h-1zM357 331h1v1h-1zM372 338h1v1h-1zM176 369h1v1h-1zM44 467h1v1h-1zM173 371h1v1h-1zM115 444h1v1h-1zM212 364h1v1h-1zM60 450h1v1h-1zM300 323h1v1h-1zM118 363h1v1h-1zM257 384h1v1h-1zM190 355h1v1h-1zM156 449h1v1h-1zM464 296h1v1h-1zM104 466h1v1h-1zM171 390h1v1h-1zM86 500h1v1h-1zM277 341h1v1h-1zM392 331h1v1h-1zM462 312h1v1h-1zM354 390h1v1h-1zM116 453h1v1h-1zM267 393h1v1h-1zM225 309h1v1h-1zM281 278h1v1h-1zM319 285h1v1h-1zM92 420h1v1h-1zM394 357h1v1h-1zM243 373h1v1h-1zM57 460h1v1h-1zM185 362h1v1h-1zM46 414h1v1h-1zM71 429h1v1h-1zM66 458h1v1h-1zM322 348h1v1h-1zM207 346h1v1h-1zM284 383h1v1h-1zM301 370h1v1h-1zM270 383h1v1h-1zM109 489h1v1h-1zM300 363h1v1h-1zM292 402h1v1h-1zM188 339h1v1h-1zM81 487h1v1h-1zM84 507h1v1h-1zM455 296h1v1h-1zM314 345h1v1h-1zM70 418h1v1h-1zM351 392h1v1h-1zM391 244h1v1h-1zM109 449h1v1h-1zM96 381h1v1h-1zM473 327h1v1h-1zM351 277h1v1h-1zM327 367h1v1h-1zM370 372h1v1h-1zM171 370h1v1h-1zM364 344h1v1h-1zM90 369h1v1h-1zM49 531h1v1h-1zM385 369h1v1h-1zM86 429h1v1h-1zM273 292h1v1h-1zM104 370h1v1h-1zM189 416h1v1h-1zM47 402h1v1h-1zM73 451h1v1h-1zM259 407h1v1h-1zM71 469h1v1h-1zM138 437h1v1h-1zM280 382h1v1h-1zM53 466h1v1h-1zM142 463h1v1h-1zM203 364h1v1h-1zM482 270h1v1h-1zM160 318h1v1h-1zM157 437h1v1h-1zM227 299h1v1h-1zM147 436h1v1h-1zM305 298h1v1h-1zM242 351h1v1h-1zM43 444h1v1h-1zM221 318h1v1h-1zM147 361h1v1h-1zM229 336h1v1h-1zM202 413h1v1h-1zM383 319h1v1h-1zM179 368h1v1h-1zM196 369h1v1h-1zM87 378h1v1h-1zM329 280h1v1h-1zM148 343h1v1h-1zM82 466h1v1h-1zM195 385h1v1h-1zM392 321h1v1h-1zM293 396h1v1h-1zM194 413h1v1h-1zM148 419h1v1h-1zM89 393h1v1h-1zM106 378h1v1h-1zM95 434h1v1h-1zM145 456h1v1h-1zM271 381h1v1h-1zM320 359h1v1h-1zM395 360h1v1h-1zM145 368h1v1h-1zM291 363h1v1h-1zM377 289h1v1h-1zM174 331h1v1h-1zM369 330h1v1h-1zM328 312h1v1h-1zM53 441h1v1h-1zM298 402h1v1h-1zM68 514h1v1h-1zM56 436h1v1h-1zM56 435h1v1h-1zM480 259h1v1h-1zM134 362h1v1h-1zM112 440h1v1h-1zM207 368h1v1h-1zM125 349h1v1h-1zM111 432h1v1h-1zM175 382h1v1h-1zM315 382h1v1h-1zM55 493h1v1h-1zM211 396h1v1h-1zM121 374h1v1h-1zM172 318h1v1h-1zM57 473h1v1h-1zM350 391h1v1h-1zM393 303h1v1h-1z" fill="#f2f258"/>
<path d="M43.5 208.4 L45.8 203.1 L50.4 205.4 L53.8 206.1 L56.1 209.6 L58.4 210.7 L61.9 199.2 L64.2 195.7 L66.5 199.2 L70.0 206.8 L74.6 207.7 L78.0 210.7 L80.3 214.2 L82.6 211.9 L84.9 216.0 L87.9 205.0 L90.2 206.1 L93.5 202.6 L96.5 209.1 L98.8 213.7 L101.8 210.7 L104.5 198.0 L106.4 184.7 L108.2 200.3 L110.3 207.3 L113.7 211.9 L118.3 213.0 L120.6 214.2 L124.1 211.9 L127.6 213.0 L131.0 213.0 L133.3 210.7 L136.8 214.2 L141.4 213.0 L146.0 214.2 L148.3 210.7 L151.8 207.3 L154.0 210.7 L156.4 207.3 L158.7 210.0 L164.4 209.6 L167.9 213.0 L173.6 213.0 L178.2 209.6 L181.7 206.1 L184.7 196.2 L187.5 202.6 L190.9 209.6 L194.4 213.0 L197.0 217.4 L199.5 215.3 L202.0 216.0 L205.0 213.0 L207.5 213.0 L210.0 212.6 L212.5 212.6 L215.0 213.0 L217.5 213.0 L220.0 212.6 L222.5 213.4 L225.0 214.6 L227.5 212.6 L230.0 213.0 L232.5 212.6 L235.0 213.0 L237.5 212.4 L240.0 213.4 L242.5 213.0 L245.0 212.6 L247.5 213.0 L250.0 213.0 L252.5 213.8 L255.0 213.4 L257.5 212.6 L260.0 212.4 L262.5 212.6 L265.0 213.4 L267.5 213.4 L270.0 213.8 L272.5 212.4 L275.0 213.0 L277.5 213.0 L280.0 213.8 L282.5 213.0 L285.0 212.4 L287.5 212.6 L290.0 213.4 L292.5 213.8 L295.0 213.0 L297.5 213.8 L300.0 212.4 L302.5 213.0 L305.0 213.0 L307.5 212.4 L310.0 212.6 L312.5 213.0 L315.0 211.0 L317.5 212.4 L320.0 213.0 L322.5 212.4 L325.0 211.5 L327.5 213.0 L330.0 213.4 L332.5 212.6 L335.0 213.8 L337.5 209.6 L340.0 211.5 L342.5 212.4 L345.0 213.4 L347.5 213.4 L350.0 213.8 L352.5 214.2 L355.0 212.6 L357.5 213.4 L360.0 211.6 L362.5 213.0 L365.0 213.0 L367.5 213.0 L370.0 213.0 L372.5 212.0 L375.0 213.0 L377.5 214.0 L380.0 213.8 L382.5 213.4 L385.0 212.0 L387.5 213.8 L390.0 211.6 L392.5 213.0 L395.0 213.4 L397.5 212.6 L400.0 213.5 L402.5 213.4 L405.0 212.6 L407.5 213.0 L410.0 212.6 L412.5 212.6 L415.0 213.4 L417.5 212.6 L420.0 213.0 L422.5 211.4 L425.0 213.8 L427.5 213.0 L430.0 212.4 L432.5 213.0 L435.0 212.6 L437.5 214.0 L440.0 213.8 L442.5 213.0 L445.0 211.5 L447.5 212.4 L450.0 213.0 L452.5 212.6 L455.0 214.3 L457.5 212.6 L460.0 212.5 L462.5 213.8 L465.0 213.8 L467.5 213.0 L470.0 213.8 L472.5 212.4 L475.0 212.6 L477.5 213.0 L480.0 213.0 L482.5 213.0 L485.0 213.0 L487.5 213.4 L490.0 212.4 L492.5 213.8 L495.0 213.4 L497.5 213.0 L500.0 213.0 L502.5 212.4 L505.0 213.0 L507.5 213.4 L510.0 213.0 L512.5 213.0 L515.0 213.0 L517.5 213.4 L520.0 213.8 L522.5 213.4 L525.0 212.4 L527.5 213.0 L530.0 213.0 L532.5 212.6 L535.0 211.5 L537.5 212.4 L540.0 212.5 L542.5 213.4 L545.0 213.8 L547.5 212.6" stroke="#4a9fd8" stroke-width="1" fill="none" shape-rendering="auto"/>
<g font-family="'Liberation Sans',sans-serif" font-size="10.5" fill="#000" shape-rendering="auto">
<text x="38" y="555.3" text-anchor="end">5</text>
<text x="552" y="555.3">5</text>
<text x="38" y="490.3" text-anchor="end">10</text>
<text x="552" y="490.3">10</text>
<text x="38" y="425.3" text-anchor="end">15</text>
<text x="552" y="425.3">15</text>
<text x="38" y="360.3" text-anchor="end">20</text>
<text x="552" y="360.3">20</text>
<text x="38" y="295.3" text-anchor="end">25</text>
<text x="552" y="295.3">25</text>
<text x="38" y="230.3" text-anchor="end">30</text>
<text x="552" y="230.3">30</text>
<text x="38" y="166.3" text-anchor="end">35</text>
<text x="552" y="166.3">35</text>
<text x="43.5" y="631" text-anchor="middle">0</text>
<text x="93.5" y="631" text-anchor="middle">200</text>
<text x="143.5" y="631" text-anchor="middle">400</text>
<text x="193.5" y="631" text-anchor="middle">600</text>
<text x="244.5" y="631" text-anchor="middle">800</text>
<text x="294.5" y="631" text-anchor="middle">1000</text>
<text x="344.5" y="631" text-anchor="middle">1200</text>
<text x="395.5" y="631" text-anchor="middle">1400</text>
<text x="445.5" y="631" text-anchor="middle">1600</text>
<text x="495.5" y="631" text-anchor="middle">1800</text>
<text x="546.5" y="631" text-anchor="middle">2000gB</text>
<text x="44" y="159">MB/s</text>
<text x="546" y="159" text-anchor="end">ms</text>
</g>
</svg>
<!-- start button -->
<div class="abs" style="left:583px;top:143px;width:73px;height:19px;border:1px solid #3c7fb1;border-radius:3px;background:linear-gradient(180deg,#f2f2f2 0,#ebebeb 48%,#dddddd 52%,#cfcfcf 100%);box-shadow:inset 0 0 0 1px #55d4f8,inset 0 0 3px 2px rgba(110,205,245,.75)"></div>
<div class="lbl" style="left:606px;top:146px">開始</div>
<div class="sep" style="top:172px"></div>
<div class="radio" style="top:179px"><div class="abs" style="left:2px;top:2px;width:6px;height:6px;border-radius:50%;background:radial-gradient(circle at 40% 35%,#8fdcf6 0,#2480bc 45%,#0c3f78 100%)"></div></div>
<div class="lbl" style="left:595px;top:180px">讀取</div>
<div class="radio" style="top:194px"></div>
<div class="lbl" style="left:595px;top:195px">寫入</div>
<div class="sep" style="top:208px"></div>
<div class="chk" style="top:215px"></div>
<div class="lbl" style="left:595px;top:216px">短程測試</div>
<!-- spin -->
<div class="abs" style="left:579px;top:234px;width:62px;height:18px;border:1px solid #b8bbc0;border-radius:2px;background:#fff"></div>
<div class="abs" style="left:583px;top:237px;font-family:'Liberation Sans',sans-serif;font-size:11px;line-height:12px;color:#808080">40</div>
<div class="abs" style="left:624px;top:236px;width:15px;height:7px;border:1px solid #c8c8c8;background:linear-gradient(180deg,#f4f4f4,#e0e0e0)"></div>
<div class="abs" style="left:624px;top:243px;width:15px;height:7px;border:1px solid #c8c8c8;background:linear-gradient(180deg,#f4f4f4,#e0e0e0)"></div>
<svg class="abs" style="left:629px;top:238px" width="5" height="3" viewBox="0 0 5 3"><path d="M0 3L2.500 0L5 3z" fill="#999"/></svg>
<svg class="abs" style="left:629px;top:245px" width="5" height="3" viewBox="0 0 5 3"><path d="M0 0L2.500 3L5 0z" fill="#999"/></svg>
<div class="abs" style="left:652px;top:237px;font-family:'Liberation Sans',sans-serif;font-size:11px;line-height:12px">GB</div>
<div class="chk" style="top:260px"><svg width="9" height="9" viewBox="0 0 9 9"><path d="M1 4.500l2.300 3L8 0.800" fill="none" stroke="#3f5290" stroke-width="1.900"/></svg></div>
<div class="lbl" style="left:595px;top:261px">傳輸速率</div>
<div class="sep" style="top:274px"></div>
<div class="lbl" style="left:579px;top:278px">最小值</div>
<div class="val" style="top:292px;color:#3aa0e6">30.7 MB/s</div>
<div class="lbl" style="left:579px;top:308px">最大值</div>
<div class="val" style="top:322px;color:#3aa0e6">33.2 MB/s</div>
<div class="lbl" style="left:579px;top:337px">平均值</div>
<div class="val" style="top:350px;color:#3aa0e6">31.2 MB/s</div>
<div class="sep" style="top:370px"></div>
<div class="chk" style="top:376px"><svg width="9" height="9" viewBox="0 0 9 9"><path d="M1 4.500l2.300 3L8 0.800" fill="none" stroke="#3f5290" stroke-width="1.900"/></svg></div>
<div class="lbl" style="left:595px;top:377px">存取時間</div>
<div class="val" style="top:391px;color:#ffff66">17.6 ms</div>
<div class="chk" style="top:407px"><svg width="9" height="9" viewBox="0 0 9 9"><path d="M1 4.500l2.300 3L8 0.800" fill="none" stroke="#3f5290" stroke-width="1.900"/></svg></div>
<div class="lbl" style="left:595px;top:408px">高載速率</div>
<div class="val" style="top:422px;color:#fff">30.9 MB/s</div>
<div class="lbl" style="left:579px;top:438px"><span style="letter-spacing:-.5px;-webkit-text-stroke:0">CPU </span>使用率</div>
<div class="val" style="top:452px;color:#fff">7.1%</div>

</body>
</html>
